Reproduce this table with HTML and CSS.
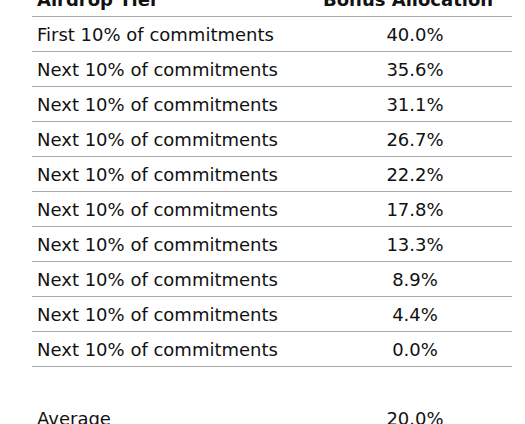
FILE: index.html
```html
<!DOCTYPE html>
<html>
<head>
<meta charset="utf-8">
<link rel="stylesheet" href="styles.css">
</head>
<body>
<table class="tiers">
  <thead>
    <tr><th class="tier">Airdrop Tier</th><th class="bonus">Bonus Allocation</th></tr>
  </thead>
  <tbody>
    <tr><td class="tier">First 10% of commitments</td><td class="bonus">40.0%</td></tr>
    <tr><td class="tier">Next 10% of commitments</td><td class="bonus">35.6%</td></tr>
    <tr><td class="tier">Next 10% of commitments</td><td class="bonus">31.1%</td></tr>
    <tr><td class="tier">Next 10% of commitments</td><td class="bonus">26.7%</td></tr>
    <tr><td class="tier">Next 10% of commitments</td><td class="bonus">22.2%</td></tr>
    <tr><td class="tier">Next 10% of commitments</td><td class="bonus">17.8%</td></tr>
    <tr><td class="tier">Next 10% of commitments</td><td class="bonus">13.3%</td></tr>
    <tr><td class="tier">Next 10% of commitments</td><td class="bonus">8.9%</td></tr>
    <tr><td class="tier">Next 10% of commitments</td><td class="bonus">4.4%</td></tr>
    <tr><td class="tier">Next 10% of commitments</td><td class="bonus">0.0%</td></tr>
    <tr class="spacer"><td class="tier"></td><td class="bonus"></td></tr>
    <tr class="total"><td class="tier">Average</td><td class="bonus">20.0%</td></tr>
  </tbody>
</table>
</body>
</html>
```

FILE: styles.css
```css
html, body {
  margin: 0;
  padding: 0;
  background: #ffffff;
}
body {
  font-family: "DejaVu Sans", Verdana, sans-serif;
  font-size: 18px;
  color: #111111;
  overflow: hidden;
}
.tiers {
  margin: -18px 0 0 32px;
  width: 480px;
  border-collapse: collapse;
  table-layout: fixed;
}
.tiers th, .tiers td {
  height: 34px;
  padding: 0 5px;
  border-bottom: 1px solid #aaaaaa;
  vertical-align: middle;
  white-space: nowrap;
}
.tiers th {
  font-weight: bold;
}
.tiers th.bonus {
  text-align: left;
  padding-left: 5px;
}
.tiers .tier {
  text-align: left;
  width: 276px;
}
.tiers .bonus {
  text-align: center;
}
.tiers .spacer td,
.tiers .total td {
  border-bottom: none;
}
```
